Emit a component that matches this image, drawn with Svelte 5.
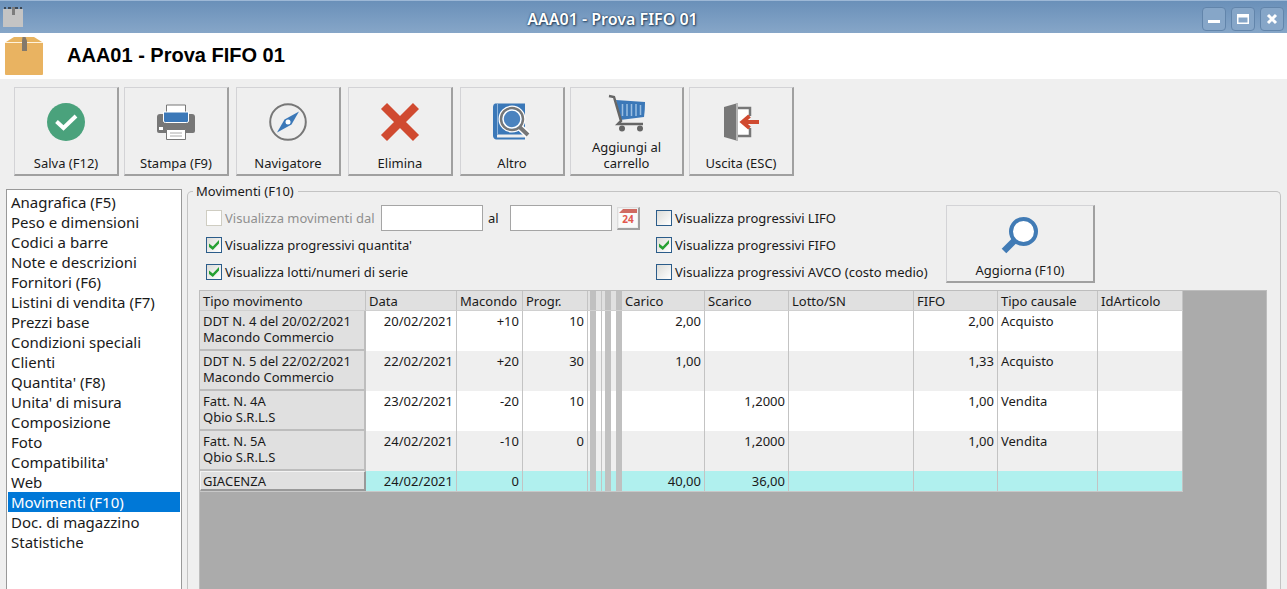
<script lang="ts">
  const toolGroups = [
    [
      { icon: 'save', label: 'Salva (F12)' },
      { icon: 'print', label: 'Stampa (F9)' },
    ],
    [{ icon: 'compass', label: 'Navigatore' }],
    [{ icon: 'delete', label: 'Elimina' }],
    [
      { icon: 'book', label: 'Altro' },
      { icon: 'cart', label: 'Aggiungi al carrello', wide: true },
      { icon: 'exit', label: 'Uscita (ESC)' },
    ],
  ];

  const sections = [
    'Anagrafica (F5)',
    'Peso e dimensioni',
    'Codici a barre',
    'Note e descrizioni',
    'Fornitori (F6)',
    'Listini di vendita (F7)',
    'Prezzi base',
    'Condizioni speciali',
    'Clienti',
    "Quantita' (F8)",
    "Unita' di misura",
    'Composizione',
    'Foto',
    "Compatibilita'",
    'Web',
    'Movimenti (F10)',
    'Doc. di magazzino',
    'Statistiche',
  ];

  const rows = [
    { tipo: 'DDT N. 4 del 20/02/2021', chi: 'Macondo Commercio', data: '20/02/2021', macondo: '+10', progr: '10', carico: '2,00', scarico: '', fifo: '2,00', causale: 'Acquisto' },
    { tipo: 'DDT N. 5 del 22/02/2021', chi: 'Macondo Commercio', data: '22/02/2021', macondo: '+20', progr: '30', carico: '1,00', scarico: '', fifo: '1,33', causale: 'Acquisto' },
    { tipo: 'Fatt. N. 4A', chi: 'Qbio S.R.L.S', data: '23/02/2021', macondo: '-20', progr: '10', carico: '', scarico: '1,2000', fifo: '1,00', causale: 'Vendita' },
    { tipo: 'Fatt. N. 5A', chi: 'Qbio S.R.L.S', data: '24/02/2021', macondo: '-10', progr: '0', carico: '', scarico: '1,2000', fifo: '1,00', causale: 'Vendita' },
    { tipo: 'GIACENZA', chi: '', data: '24/02/2021', macondo: '0', progr: '', carico: '40,00', scarico: '36,00', fifo: '', causale: '', total: true },
  ];

  let selected = $state('Movimenti (F10)');
  let filters = $state({ dal: false, quantita: true, lotti: true, lifo: false, fifo: true, avco: false });
</script>

<div class="window">
  <header class="titlebar">
    <svg class="app-icon" width="20" height="20" viewBox="0 0 20 20">
      <path d="M0 2H20V20H0Z" fill="#c4c4c4" />
      <path d="M1 0h2v2H1zM5 0h3v2H5zM12 0h3v2h-3zM17 0h2v2h-2z" fill="#3b4856" />
      <path d="M9 0h3v8H9z" fill="#7d7d7d" />
    </svg>
    <span class="title">AAA01 - Prova FIFO 01</span>
    <div class="window-buttons">
      <button aria-label="Riduci a icona">
        <svg width="14" height="14" viewBox="0 0 14 14"><path d="M1 8h12v3H1z" fill="#fff" /></svg>
      </button>
      <button aria-label="Ingrandisci">
        <svg width="14" height="14" viewBox="0 0 14 14"><path d="M1 2h12v10H1zM2.500 5.500v5h9v-5z" fill="#fff" fill-rule="evenodd" /></svg>
      </button>
      <button aria-label="Chiudi">
        <svg width="14" height="14" viewBox="0 0 14 14"><path d="M3 3l8 8M11 3l-8 8" stroke="#fff" stroke-width="3" /></svg>
      </button>
    </div>
  </header>

  <div class="heading">
    <svg width="38" height="38" viewBox="0 0 38 38">
      <path d="M1 5L9 0H29L37 5Z" fill="#e8b460" />
      <path d="M0 6H38V37Q38 38 37 38H1Q0 38 0 37Z" fill="#e9b361" />
      <path d="M0 5.500H38" stroke="#fff3dc" />
      <path d="M17.500 0h3l1.500 4v10h-5V4z" fill="#83796b" />
    </svg>
    <h1>AAA01 - Prova FIFO 01</h1>
  </div>

  <div class="toolbar">
    {#each toolGroups as group}
      <div class="tool-group">
        {#each group as tool}
          <button class="tool" class:wide={tool.wide}>
            <svg width="40" height="40" viewBox="0 0 40 40" fill="none">
              {#if tool.icon === 'save'}
                <circle cx="20" cy="20" r="19" fill="#4aa27c" />
                <path d="M10.500 19.500L17.500 26L30 14" stroke="#fff" stroke-width="4" />
              {:else if tool.icon === 'print'}
                <path d="M4 12h32q3 0 3 3v14q0 2-2 2H3q-2 0-2-2V15q0-3 3-3z" fill="#777" />
                <path d="M10.500 3h19v12h-19z" fill="#fff" stroke="#777" />
                <path d="M7.500 10h25v9q0 1.500-2 1.500h-21q-2 0-2-1.500z" fill="#3b78b8" stroke="#fff" />
                <path d="M10.500 27.500h19v10h-19z" fill="#fff" stroke="#777" />
                <path d="M14 31h12M14 34h12" stroke="#aaa" />
                <path d="M3 25h4v3H3z" fill="#fff" />
              {:else if tool.icon === 'compass'}
                <circle cx="20" cy="20" r="17.800" stroke="#777" stroke-width="2" />
                <path d="M31 9.500L23.500 22.500L9 30.500L16.500 17.500Z" fill="#3b78b8" />
                <circle cx="20" cy="20" r="2.500" fill="#fff" />
              {:else if tool.icon === 'delete'}
                <path d="M4 4L36 36M36 4L4 36" stroke="#d04a30" stroke-width="8.500" />
              {:else if tool.icon === 'book'}
                <path d="M3 1.500h30v31H5v3h28v2H4q-3-1-3-4V5q0-3 2-3.500z" fill="#3b78b8" />
                <path d="M5.500 2v30" stroke="#8fb5dc" />
                <circle cx="20" cy="17" r="11" fill="#3b78b8" stroke="#fff" stroke-width="5" />
                <path d="M27.500 25L36 33" stroke="#fff" stroke-width="7" />
                <circle cx="20" cy="17" r="11" fill="#4b83bf" stroke="#777" stroke-width="2.500" />
                <circle cx="20" cy="17" r="9" stroke="#fff" stroke-width="1.500" />
                <path d="M27.500 25L36 33" stroke="#777" stroke-width="4" />
              {:else if tool.icon === 'cart'}
                <path d="M9 7L38 9Q38 18 37 24L13 27Z" fill="#3b78b8" />
                <path d="M15.500 11v12M20 11v12M24.500 11v12M29 11v12M33.500 12v10" stroke="#9bbee1" stroke-width="1.500" />
                <path d="M2 3L7 4L14 28L11 31H36" stroke="#666" stroke-width="2.500" />
                <circle cx="15" cy="35.500" r="3" fill="#666" />
                <circle cx="33" cy="35.500" r="3" fill="#666" />
              {:else}
                <path d="M15 6h14v28H15z" fill="#fff" />
                <path d="M16 6H29v8M29 26v8H16" stroke="#777" stroke-width="2.500" />
                <path d="M3 5L17 1V39L3 35Z" fill="#777" />
                <path d="M16 1V39" stroke="#b5b5b5" stroke-width="2" />
                <path d="M38 20H22M28.500 14L21.500 20L28.500 26" stroke="#d04a30" stroke-width="4" />
              {/if}
            </svg>
            <span>{tool.label}</span>
          </button>
        {/each}
      </div>
    {/each}
  </div>

  <main>
    <nav>
      {#each sections as section}
        <button class:selected={selected === section} onclick={() => (selected = section)}>{section}</button>
      {/each}
    </nav>

    <fieldset>
      <legend>Movimenti (F10)</legend>

      <div class="filters">
        <div class="filter-column first">
          <div class="filter-row">
            <label class="disabled"><input type="checkbox" bind:checked={filters.dal} disabled />Visualizza movimenti dal</label>
            <div class="dates">
              <input type="text" aria-label="Dal" />
              <label for="date-to">al</label>
              <input type="text" id="date-to" />
              <button class="calendar" aria-label="Calendario">
                <svg width="20" height="20" viewBox="0 0 20 20">
                  <path d="M1 1h18v18H1z" fill="#fafafa" />
                  <path d="M1 5L5 1h14v4z" fill="#cf6a61" />
                  <text x="10" y="15" text-anchor="middle">24</text>
                </svg>
              </button>
            </div>
          </div>
          <label><input type="checkbox" bind:checked={filters.quantita} />Visualizza progressivi quantita'</label>
          <label><input type="checkbox" bind:checked={filters.lotti} />Visualizza lotti/numeri di serie</label>
        </div>
        <div class="filter-column">
          <label><input type="checkbox" bind:checked={filters.lifo} />Visualizza progressivi LIFO</label>
          <label><input type="checkbox" bind:checked={filters.fifo} />Visualizza progressivi FIFO</label>
          <label><input type="checkbox" bind:checked={filters.avco} />Visualizza progressivi AVCO (costo medio)</label>
        </div>
        <button class="tool refresh">
          <svg width="40" height="40" viewBox="0 0 40 40">
            <path d="M15 24L4 35" stroke="#417bb5" stroke-width="6.500" />
            <circle cx="23.500" cy="15.500" r="12.500" fill="#fff" stroke="#417bb5" stroke-width="4" />
          </svg>
          <span>Aggiorna (F10)</span>
        </button>
      </div>

      <div class="grid">
        <table>
          <colgroup>
            <col class="w-tipo" /><col class="w-data" /><col class="w-macondo" /><col class="w-progr" />
            <col class="w-bar-a" /><col class="w-bar-b" /><col class="w-bar-c" />
            <col class="w-carico" /><col class="w-qty" /><col class="w-lotto" /><col class="w-qty" />
            <col class="w-causale" /><col class="w-id" />
          </colgroup>
          <thead>
            <tr>
              <th>Tipo movimento</th>
              <th>Data</th>
              <th>Macondo</th>
              <th>Progr.</th>
              <th class="bar a"></th>
              <th class="bar b"></th>
              <th class="bar c"></th>
              <th>Carico</th>
              <th>Scarico</th>
              <th>Lotto/SN</th>
              <th>FIFO</th>
              <th>Tipo causale</th>
              <th>IdArticolo</th>
            </tr>
          </thead>
          <tbody>
            {#each rows as row}
              <tr class:total={row.total}>
                <th scope="row">{row.tipo}{#if row.chi}<br />{row.chi}{/if}</th>
                <td class="num">{row.data}</td>
                <td class="num">{row.macondo}</td>
                <td class="num">{row.progr}</td>
                <td class="bar a"></td>
                <td class="bar b"></td>
                <td class="bar c"></td>
                <td class="num">{row.carico}</td>
                <td class="num">{row.scarico}</td>
                <td></td>
                <td class="num">{row.fifo}</td>
                <td>{row.causale}</td>
                <td></td>
              </tr>
            {/each}
          </tbody>
        </table>
      </div>
    </fieldset>
  </main>
</div>

<style>
  :global(body) {
    margin: 0;
    background: #efefef;
  }

  .window {
    display: flex;
    flex-direction: column;
    height: 100vh;
    overflow: hidden;
    color: #1a1a1a;
    background: #efefef;
    font-family: Tahoma, 'Noto Sans', sans-serif;
    font-size: 13px;
    line-height: 16px;
  }

  button,
  input {
    box-sizing: border-box;
    margin: 0;
    font: inherit;
    color: inherit;
  }

  .titlebar {
    display: flex;
    align-items: center;
    box-sizing: border-box;
    height: 33px;
    flex-shrink: 0;
    padding: 3px 3px 0;
    border-top: 1px solid #9db8d6;
    background: linear-gradient(#6a90b9, #86a6c8);
  }

  .app-icon {
    margin-bottom: 3px;
  }

  .title {
    flex: 1;
    text-align: center;
    font-size: 16px;
    font-weight: 600;
    color: #fff;
    text-shadow: 1px 1px 2px #24415f, 0 0 2px #24415f;
  }

  .window-buttons {
    display: flex;
    gap: 5px;
  }

  .window-buttons button {
    display: flex;
    align-items: center;
    justify-content: center;
    width: 24px;
    height: 24px;
    padding: 0;
    border: 1px solid #6285ab;
    border-radius: 4px;
    background: #86a6c8;
  }

  .heading {
    display: flex;
    align-items: center;
    gap: 24px;
    height: 46px;
    flex-shrink: 0;
    padding-left: 5px;
    background: #fff;
  }

  h1 {
    margin: 0;
    padding-bottom: 2px;
    font: bold 20px/24px 'Liberation Sans', Arial, sans-serif;
    color: #000;
  }

  .toolbar {
    display: flex;
    gap: 7px;
    padding: 8px 14px;
  }

  .tool-group {
    display: flex;
    gap: 5px;
  }

  .tool {
    display: flex;
    flex-direction: column;
    align-items: center;
    justify-content: flex-end;
    width: 105px;
    height: 89px;
    padding: 0 12px 3px;
    border: 1px solid #d3d3d6;
    border-right: 2px solid #a0a0a0;
    border-bottom: 2px solid #a0a0a0;
    background: #efefef;
    white-space: nowrap;
  }

  .tool svg {
    margin-bottom: 13px;
  }

  .tool.wide {
    width: 114px;
    white-space: normal;
  }

  .tool.wide svg {
    margin-bottom: 6px;
  }

  main {
    display: flex;
    flex: 1;
    gap: 5px;
    min-height: 0;
    padding: 5px 6px 0;
  }

  nav {
    box-sizing: border-box;
    width: 176px;
    flex-shrink: 0;
    padding: 2px 1px;
    border: 1px solid #999;
    border-bottom: none;
    background: #fff;
  }

  nav button {
    display: block;
    width: 100%;
    height: 20px;
    padding: 0 3px;
    border: none;
    background: none;
    font-size: 15px;
    line-height: 20px;
    text-align: left;
    white-space: nowrap;
  }

  nav button.selected {
    color: #fff;
    background: #0078d7;
  }

  fieldset {
    display: flex;
    flex-direction: column;
    flex: 1;
    min-width: 0;
    margin: -6px 0 0;
    padding: 0 13px 0 11px;
    border: 1px solid #c3c3c3;
    border-bottom: none;
    border-radius: 5px 5px 0 0;
  }

  legend {
    margin-left: -6px;
    padding: 0 4px 0 3px;
  }

  .filters {
    display: flex;
    align-items: flex-start;
    padding: 6px 0 7px 7px;
  }

  .filter-column {
    display: flex;
    flex-direction: column;
    gap: 11px;
    width: 290px;
    padding-top: 5px;
  }

  .filter-column.first {
    width: 450px;
  }

  .filter-column label {
    display: flex;
    align-items: center;
    gap: 3px;
    white-space: nowrap;
  }

  .filter-column .disabled {
    color: #8f8f8f;
  }

  .filter-row {
    display: flex;
    justify-content: space-between;
    height: 16px;
    align-items: center;
    padding-right: 16px;
  }

  .dates {
    display: flex;
    align-items: center;
    gap: 5px;
  }

  .dates label {
    width: 17px;
  }

  input[type='text'] {
    width: 102px;
    height: 26px;
    padding: 0 4px;
    border: 1px solid #a5a5a5;
    background: #fff;
  }

  input[type='checkbox'] {
    display: flex;
    align-items: center;
    justify-content: center;
    appearance: none;
    width: 16px;
    height: 16px;
    border: 1px solid #2b5c8a;
    background: linear-gradient(135deg, #dcdcd8, #fff);
  }

  input[type='checkbox']:disabled {
    border-color: #cfcdc2;
    background: #fff;
  }

  input[type='checkbox']:checked::before {
    content: '';
    width: 10px;
    height: 10px;
    background: #26a032;
    clip-path: polygon(0 35%, 38% 65%, 100% 0, 100% 35%, 38% 100%, 0 70%);
  }

  .calendar {
    width: 23px;
    height: 23px;
    padding: 0;
    border: 1px solid #ddd;
    border-right: 2px solid #a0a0a0;
    border-bottom: 2px solid #a0a0a0;
    background: #efefef;
  }

  .calendar svg {
    display: block;
  }

  .calendar text {
    font-size: 10px;
    font-weight: bold;
    fill: #e2584c;
  }

  .refresh {
    width: 149px;
    height: 78px;
  }

  .refresh svg {
    margin-bottom: 6px;
  }

  .grid {
    flex: 1;
    min-height: 0;
    border: 1px solid #bdbdbd;
    border-bottom: none;
    background: #ababab;
  }

  table {
    width: 983px;
    table-layout: fixed;
    border-collapse: separate;
    border-spacing: 0;
    border-bottom: 1px solid #c8c8c8;
    background: #fff;
  }

  .w-tipo { width: 166px; }
  .w-data { width: 91px; }
  .w-macondo { width: 66px; }
  .w-progr { width: 65px; }
  .w-bar-a { width: 14px; }
  .w-bar-b { width: 9px; }
  .w-bar-c { width: 11px; }
  .w-carico { width: 83px; }
  .w-qty { width: 84px; }
  .w-lotto { width: 125px; }
  .w-causale { width: 100px; }
  .w-id { width: 85px; }

  th,
  td {
    box-sizing: border-box;
    height: 40px;
    padding: 2px 3px 0;
    border-right: 1px solid #c3c3c3;
    font-weight: normal;
    text-align: left;
    vertical-align: top;
    white-space: nowrap;
  }

  thead th {
    height: 20px;
    border-bottom: 1px solid #d0d0d0;
    background-color: #e0e0e0;
  }

  tbody th {
    border-right: 2px solid #bdbdbd;
    border-bottom: 2px solid #bdbdbd;
    background: #e0e0e0;
  }

  tbody tr:nth-child(even) {
    background: #efefef;
  }

  tbody tr.total {
    background: #b0f0ee;
  }

  .total th,
  .total td {
    height: 20px;
  }

  .total th {
    padding: 1px 2px 0;
    border: 1px solid #f3f3f3;
    border-right: 2px solid #999;
    border-bottom: 2px solid #999;
  }

  .num {
    text-align: right;
  }

  .bar {
    padding: 0;
    border-right: none;
  }

  .bar.a {
    border-right: 1px solid #c3c3c3;
    background-image: linear-gradient(90deg, transparent 2px, #c0c0c0 2px 8px, transparent 8px);
  }

  .bar.b {
    background-image: linear-gradient(90deg, transparent 3px, #c0c0c0 3px);
  }

  .bar.c {
    background-image: linear-gradient(90deg, transparent 5px, #c0c0c0 5px);
  }
</style>
